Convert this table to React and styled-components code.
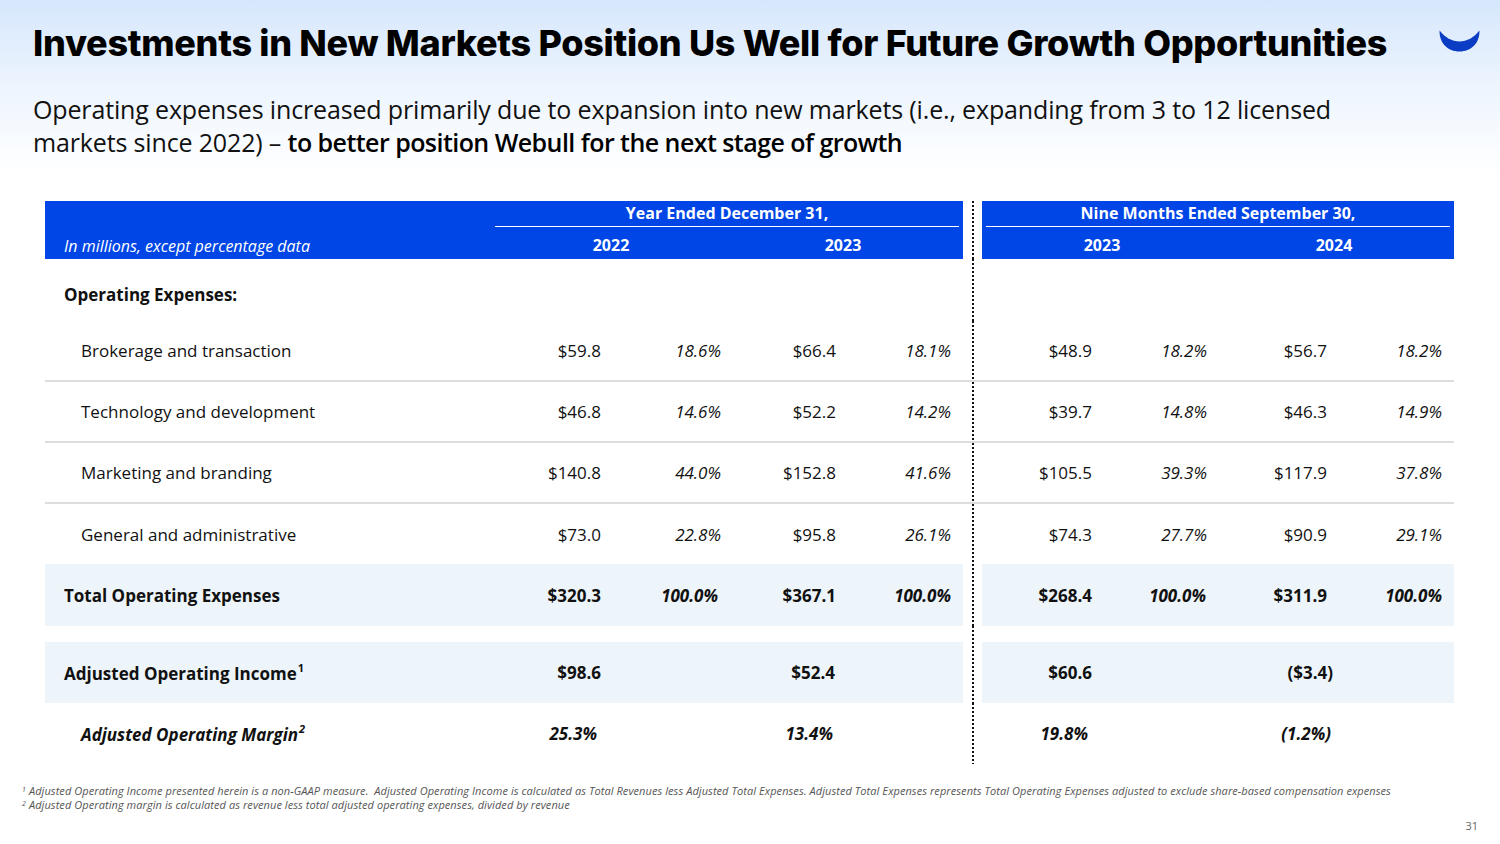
import React from "react";
import styled, { createGlobalStyle } from "styled-components";

const GlobalStyle = createGlobalStyle`
  html, body { margin: 0; padding: 0; }
  body { font-family: "Open Sans", "Liberation Sans", sans-serif; color: #111; }
`;

const Page = styled.div`
  width: 1500px;
  height: 844px;
  box-sizing: border-box;
  background: linear-gradient(to bottom, #d6e7fc 0px, #eef5fe 90px, #ffffff 175px);
  display: flex;
  flex-direction: column;
  overflow: hidden;
`;

const TitleRow = styled.div`
  display: flex;
  align-items: flex-start;
  justify-content: space-between;
  padding: 22px 20px 0 33px;
`;

const Title = styled.h1`
  margin: 0;
  font-family: Inter, "Liberation Sans", sans-serif;
  font-weight: 800;
  font-size: 36px;
  line-height: 42px;
  letter-spacing: -0.3px;
  color: #000;
`;

const Logo = styled.svg`
  margin-top: 8px;
  width: 41px;
  height: 22px;
`;

const Subtitle = styled.p`
  margin: 0;
  padding: 29px 120px 0 33px;
  font-size: 25px;
  line-height: 33px;
  letter-spacing: -0.15px;
  color: #111;
`;

const Strong = styled.span`
  font-weight: 600;
  letter-spacing: -0.55px;
  color: #000;
`;

const Table = styled.div`
  width: 1409px;
  margin: 42px 0 0 45px;
  display: flex;
  flex-direction: column;
`;

const Row = styled.div`
  display: grid;
  grid-template-columns: 918px 19px 472px;
  height: ${({ $h }) => $h}px;
  box-sizing: border-box;
  border-bottom: ${({ $line }) => ($line ? "2px solid #dddddd" : "none")};
`;

const LeftBlock = styled.div`
  display: grid;
  grid-template-columns: 450px repeat(4, 117px);
  align-items: center;
  background: ${({ $bg }) => $bg || "transparent"};
`;

const RightBlock = styled.div`
  display: grid;
  grid-template-columns: repeat(4, 118px);
  align-items: center;
  background: ${({ $bg }) => $bg || "transparent"};
`;

const Gap = styled.div`
  background: repeating-linear-gradient(to bottom, #111 0 2px, transparent 2px 4px) center top / 2px 100% no-repeat;
`;

const Label = styled.div`
  padding-left: ${({ $indent }) => ($indent ? 36 : 19)}px;
  font-size: 17px;
  font-weight: ${({ $bold }) => ($bold ? 700 : 400)};
  font-style: ${({ $italic }) => ($italic ? "italic" : "normal")};
`;

const Sup = styled.sup`
  font-size: 11px;
  vertical-align: 8px;
  margin-left: 1px;
`;

const Value = styled.div`
  text-align: right;
  padding-right: ${({ $pr }) => $pr ?? 11}px;
  font-size: 17px;
  font-weight: ${({ $bold }) => ($bold ? 700 : 400)};
  font-style: ${({ $italic }) => ($italic ? "italic" : "normal")};
`;

const HeadLabel = styled.div`
  align-self: end;
  padding: 0 0 2px 19px;
  font-size: 16px;
  font-style: italic;
  color: #fff;
`;

const Group = styled.div`
  grid-column: ${({ $span }) => $span || "1 / -1"};
  align-self: stretch;
  padding: 0 4px 0 ${({ $pl }) => $pl}px;
  display: flex;
  flex-direction: column;
  color: #fff;
`;

const GroupTitle = styled.div`
  padding: 3px 0;
  text-align: center;
  font-size: 16px;
  font-weight: 700;
  line-height: 19px;
  border-bottom: 1px solid #fff;
`;

const Years = styled.div`
  flex: 1;
  padding-top: 3px;
  display: grid;
  grid-template-columns: 1fr 1fr;
  align-items: center;
  text-align: center;
  font-size: 16px;
  font-weight: 700;
`;

const Footnotes = styled.div`
  margin: 19px 0 0 22px;
  font-size: 11px;
  line-height: 13px;
  font-style: italic;
  color: #555;
  letter-spacing: 0.07px;
`;

const FootSup = styled.sup`
  font-size: 7px;
  vertical-align: 3px;
  margin-right: 3px;
`;

const PageNum = styled.div`
  margin: 7px 22px 0 0;
  text-align: right;
  font-size: 11px;
  color: #666;
`;

const BLUE = "#0046e6";
const SHADE = "#eef5fa";

const details = [
  ["Brokerage and transaction", ["$59.8", "18.6%", "$66.4", "18.1%"], ["$48.9", "18.2%", "$56.7", "18.2%"]],
  ["Technology and development", ["$46.8", "14.6%", "$52.2", "14.2%"], ["$39.7", "14.8%", "$46.3", "14.9%"]],
  ["Marketing and branding", ["$140.8", "44.0%", "$152.8", "41.6%"], ["$105.5", "39.3%", "$117.9", "37.8%"]],
  ["General and administrative", ["$73.0", "22.8%", "$95.8", "26.1%"], ["$74.3", "27.7%", "$90.9", "29.1%"]],
];

function Cells({ values, bold, pads }) {
  return values.map((v, i) => (
    <Value key={i} $italic={i % 2 === 1} $bold={bold} $pr={pads[i]}>
      {v}
    </Value>
  ));
}

const LEFT_PADS = [11, 8, 10, 12];
const RIGHT_PADS = [8, 11, 9, 12];

export default function App() {
  return (
    <Page>
      <GlobalStyle />
      <TitleRow>
        <Title>Investments in New Markets Position Us Well for Future Growth Opportunities</Title>
        <Logo viewBox="0 0 41 22">
          <path
            d="M0.6,0.5 C0,13 9,21.5 20.5,21.5 C32,21.5 41,13 40.4,0.5 C35,7.5 28,11.5 20.5,11.5 C13,11.5 6,7.5 0.6,0.5 Z"
            fill="#0a3cc4"
          />
        </Logo>
      </TitleRow>
      <Subtitle>
        Operating expenses increased primarily due to expansion into new markets (i.e., expanding from 3 to 12 licensed
        markets since 2022) – <Strong>to better position Webull for the next stage of growth</Strong>
      </Subtitle>

      <Table>
        <Row $h={58}>
          <LeftBlock $bg={BLUE}>
            <HeadLabel>In millions, except percentage data</HeadLabel>
            <Group $span="2 / -1" $pl={0}>
              <GroupTitle>Year Ended December 31,</GroupTitle>
              <Years>
                <span>2022</span>
                <span>2023</span>
              </Years>
            </Group>
          </LeftBlock>
          <Gap />
          <RightBlock $bg={BLUE}>
            <Group $pl={4}>
              <GroupTitle>Nine Months Ended September 30,</GroupTitle>
              <Years>
                <span>2023</span>
                <span>2024</span>
              </Years>
            </Group>
          </RightBlock>
        </Row>

        <Row $h={62}>
          <LeftBlock>
            <Label $bold style={{ paddingTop: 8 }}>Operating Expenses:</Label>
          </LeftBlock>
          <Gap />
          <RightBlock />
        </Row>

        {details.map(([label, left, right], i) => (
          <Row key={label} $h={i === 3 ? 60 : 61} $line={i < 3}>
            <LeftBlock>
              <Label $indent>{label}</Label>
              <Cells values={left} pads={LEFT_PADS} />
            </LeftBlock>
            <Gap />
            <RightBlock>
              <Cells values={right} pads={RIGHT_PADS} />
            </RightBlock>
          </Row>
        ))}

        <Row $h={62}>
          <LeftBlock $bg={SHADE}>
            <Label $bold>Total Operating Expenses</Label>
            <Cells values={["$320.3", "100.0%", "$367.1", "100.0%"]} bold pads={[11, 11, 10, 12]} />
          </LeftBlock>
          <Gap />
          <RightBlock $bg={SHADE}>
            <Cells values={["$268.4", "100.0%", "$311.9", "100.0%"]} bold pads={[8, 12, 9, 12]} />
          </RightBlock>
        </Row>

        <Row $h={16}>
          <div />
          <Gap />
          <div />
        </Row>

        <Row $h={61}>
          <LeftBlock $bg={SHADE}>
            <Label $bold>
              Adjusted Operating Income<Sup>1</Sup>
            </Label>
            <Value $bold>$98.6</Value>
            <div />
            <Value $bold>$52.4</Value>
            <div />
          </LeftBlock>
          <Gap />
          <RightBlock $bg={SHADE}>
            <Value $bold $pr={8}>$60.6</Value>
            <div />
            <Value $bold $pr={3}>($3.4)</Value>
            <div />
          </RightBlock>
        </Row>

        <Row $h={61}>
          <LeftBlock>
            <Label $bold $italic $indent>
              Adjusted Operating Margin<Sup>2</Sup>
            </Label>
            <Value $bold $italic $pr={15}>25.3%</Value>
            <div />
            <Value $bold $italic $pr={13}>13.4%</Value>
            <div />
          </LeftBlock>
          <Gap />
          <RightBlock>
            <Value $bold $italic $pr={12}>19.8%</Value>
            <div />
            <Value $bold $italic $pr={5}>(1.2%)</Value>
            <div />
          </RightBlock>
        </Row>
      </Table>

      <Footnotes>
        <div>
          <FootSup>1</FootSup>Adjusted Operating Income presented herein is a non-GAAP measure.&nbsp; Adjusted Operating Income is
          calculated as Total Revenues less Adjusted Total Expenses. Adjusted Total Expenses represents Total Operating
          Expenses adjusted to exclude share-based compensation expenses
        </div>
        <div>
          <FootSup>2</FootSup>Adjusted Operating margin is calculated as revenue less total adjusted operating expenses, divided
          by revenue
        </div>
      </Footnotes>
      <PageNum>31</PageNum>
    </Page>
  );
}
